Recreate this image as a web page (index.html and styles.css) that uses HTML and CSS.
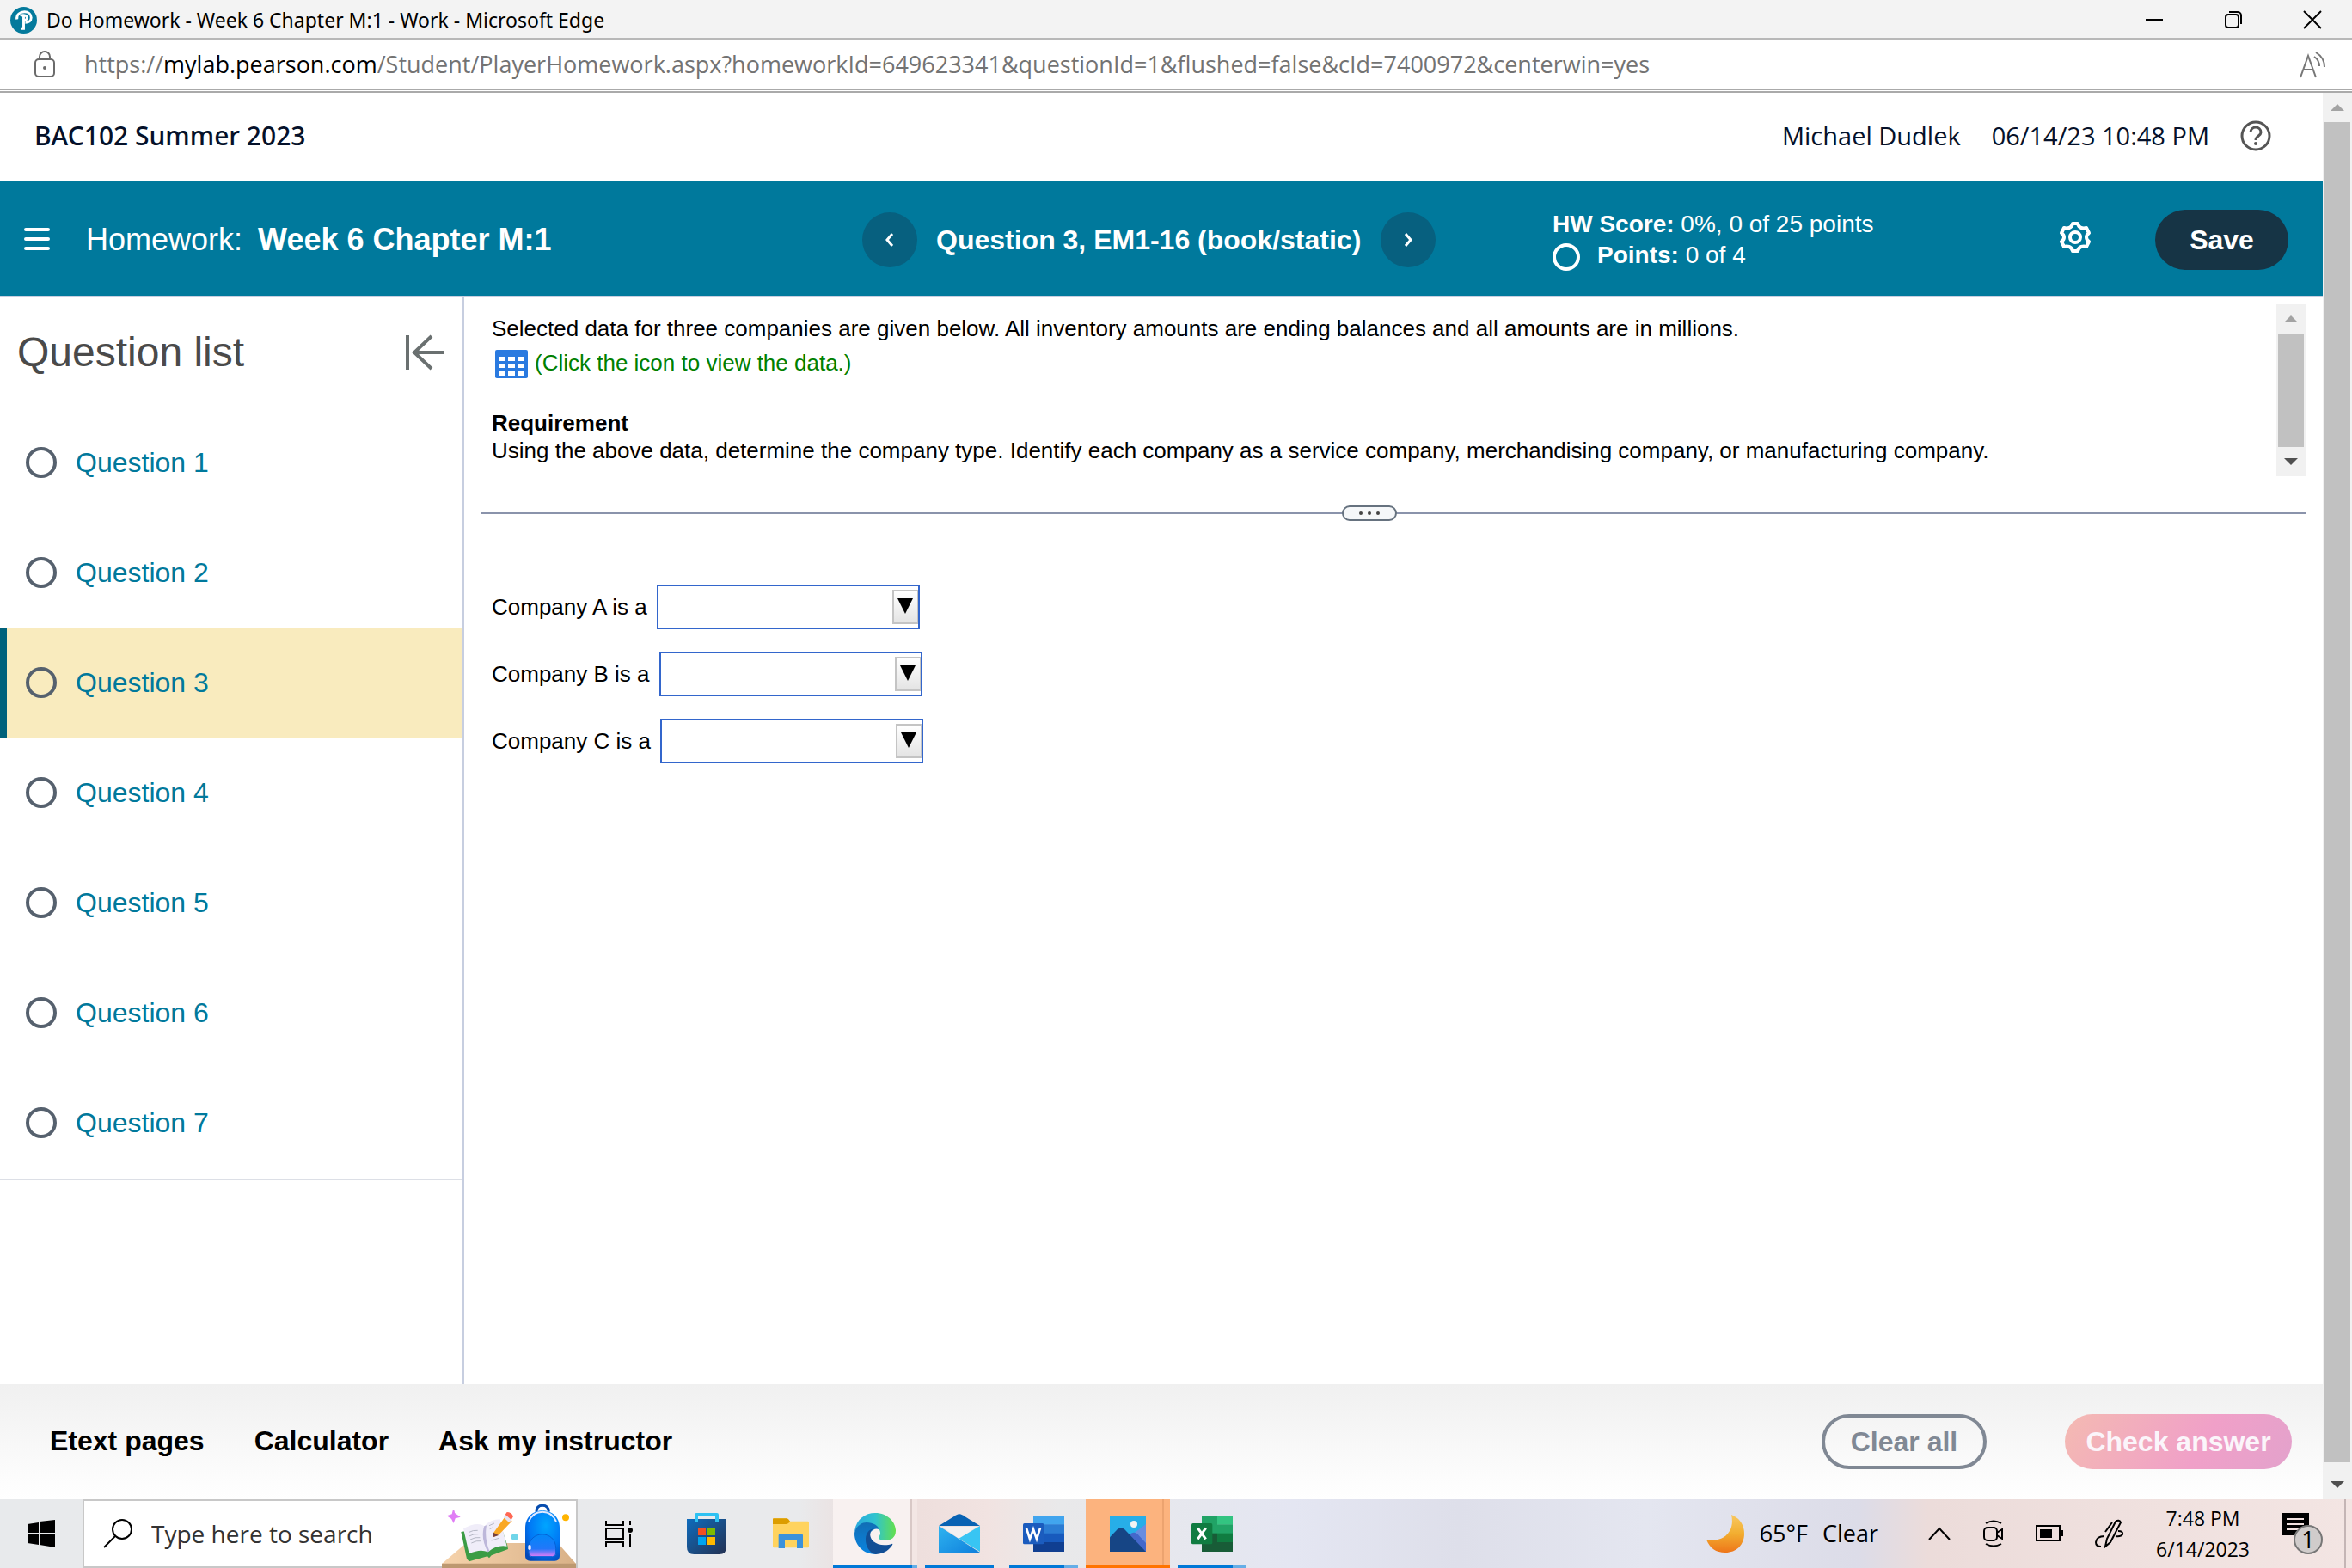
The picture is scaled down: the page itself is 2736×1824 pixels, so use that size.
FILE: index.html
```html
<!DOCTYPE html>
<html lang="en">
<head>
<meta charset="utf-8">
<title>Do Homework - Week 6 Chapter M:1</title>
<link rel="stylesheet" href="styles.css">
</head>
<body>
<header class="titlebar">
  <svg class="favicon" viewBox="0 0 32 32" aria-hidden="true"><circle cx="16" cy="16" r="16" fill="#047a9c"/><path d="M8 15c-1-6 4-9 9-9 5 0 8 3 8 7s-3 6-7 6M16 10v16h-3M12 11c3-2 8-1 8 2s-2 3-4 3" fill="none" stroke="#fff" stroke-width="3"/></svg>
  <span class="window-title">Do Homework - Week 6 Chapter M:1 - Work - Microsoft Edge</span>
  <div class="window-controls">
    <button type="button" aria-label="Minimize"><svg width="22" height="22" viewBox="0 0 22 22"><path d="M1 11h20" stroke="#000" stroke-width="2"/></svg></button>
    <button type="button" aria-label="Restore"><svg width="22" height="22" viewBox="0 0 22 22" fill="none" stroke="#000" stroke-width="2"><rect x="2" y="5" width="15" height="15" rx="3"/><path d="M6 2h10a4 4 0 0 1 4 4v10"/></svg></button>
    <button type="button" aria-label="Close"><svg width="22" height="22" viewBox="0 0 22 22"><path d="M1 1l20 20M21 1L1 21" stroke="#000" stroke-width="2"/></svg></button>
  </div>
</header>
<div class="addressbar">
  <svg class="lock" viewBox="0 0 26 32" fill="none" stroke="#6b6b6b" stroke-width="2" aria-hidden="true"><rect x="2" y="10" width="22" height="20" rx="4"/><path d="M7 10V7a6 6 0 0 1 12 0v3"/><circle cx="13" cy="20" r="2" fill="#6b6b6b" stroke="none"/></svg>
  <span class="url">https://<b>mylab.pearson.com</b>/Student/PlayerHomework.aspx?homeworkId=649623341&amp;questionId=1&amp;flushed=false&amp;cId=7400972&amp;centerwin=yes</span>
  <button type="button" class="read-aloud" aria-label="Read aloud"><svg width="32" height="32" viewBox="0 0 32 32" fill="none" stroke="#777" stroke-width="2"><path d="M2 31L11 6l9 25M5 22h12M18 7q6 4 6 11M20 2q10 6 10 17"/></svg></button>
</div>
<div class="viewport">
  <div class="page">
    <div class="coursebar">
      <span class="course">BAC102 Summer 2023</span>
      <span class="user">Michael Dudlek</span>
      <span class="user">06/14/23 10:48 PM</span>
      <button type="button" class="help" aria-label="Help"><svg width="36" height="36" viewBox="0 0 36 36" fill="none" stroke="#555" stroke-width="3"><circle cx="18" cy="18" r="16"/><path d="M12 14c0-8 12-8 12 0 0 4-6 4-6 9"/><circle cx="18" cy="27" r="2" fill="#555" stroke="none"/></svg></button>
    </div>
    <nav class="homeworkbar">
      <div class="hw-name">
        <button type="button" class="bare" aria-label="Menu"><svg width="30" height="28" viewBox="0 0 30 28" stroke="#fff" stroke-width="4" stroke-linecap="round"><path d="M2 2h26M2 13h26M2 24h26"/></svg></button>
        <h1>Homework: <strong>Week 6 Chapter M:1</strong></h1>
      </div>
      <div class="stepper">
        <button type="button" aria-label="Previous question"><svg width="14" height="18" viewBox="0 0 14 18"><path d="M10 2L4 9l6 7" fill="none" stroke="#fff" stroke-width="3"/></svg></button>
        <h2>Question 3, EM1-16 (book/static)</h2>
        <button type="button" aria-label="Next question"><svg width="14" height="18" viewBox="0 0 14 18"><path d="M4 2l6 7-6 7" fill="none" stroke="#fff" stroke-width="3"/></svg></button>
      </div>
      <div class="score">
        <p><b>HW Score:</b> 0%, 0 of 25 points</p>
        <p class="points"><span class="score-ring"></span><span><b>Points:</b> 0 of 4</span></p>
      </div>
      <div class="hw-actions">
        <button type="button" class="settings" aria-label="Settings"><svg width="38" height="38" viewBox="0 0 38 38" fill="none" stroke="#fff" stroke-width="4" stroke-linejoin="round"><path d="M16 3h6q1 4 4 5t6 0l3 6q-3 2-3 5t3 5l-3 6q-3-1-6 0t-4 5h-6q-1-4-4-5t-6 0l-3-6q3-2 3-5t-3-5l3-6q3 1 6 0t4-5z"/><circle cx="19" cy="19" r="6"/></svg></button>
        <button type="button" class="save">Save</button>
      </div>
    </nav>
    <div class="workspace">
      <aside class="questions">
        <div class="questions-head">
          <h2>Question list</h2>
          <button type="button" class="bare" aria-label="Collapse list"><svg width="48" height="44" viewBox="0 0 48 44" fill="none" stroke="#6a7070" stroke-width="4"><path d="M4 2v40M32 3L12 22l20 19M12 22h34"/></svg></button>
        </div>
        <ul>
          <li><a href="#q1"><span class="ring"></span>Question 1</a></li>
          <li><a href="#q2"><span class="ring"></span>Question 2</a></li>
          <li><a href="#q3" class="current" aria-current="page"><span class="ring"></span>Question 3</a></li>
          <li><a href="#q4"><span class="ring"></span>Question 4</a></li>
          <li><a href="#q5"><span class="ring"></span>Question 5</a></li>
          <li><a href="#q6"><span class="ring"></span>Question 6</a></li>
          <li><a href="#q7"><span class="ring"></span>Question 7</a></li>
        </ul>
      </aside>
      <main class="exercise">
        <section class="prompt">
          <div class="prompt-text">
            <p>Selected data for three companies are given below. All inventory amounts are ending balances and all amounts are in millions.</p>
            <p class="data-link"><svg width="38" height="34" viewBox="0 0 38 34" aria-hidden="true"><rect width="38" height="33" rx="2" fill="#2a7ae0"/><path fill="#fff" d="M4 8h8v5H4zM15 8h8v5h-8zM26 8h8v5h-8zM4 17h8v4H4zM15 17h8v4h-8zM26 17h8v4h-8zM4 25h8v5H4zM15 25h8v5h-8zM26 25h8v5h-8z"/></svg><a href="#data">(Click the icon to view the data.)</a></p>
            <h3>Requirement</h3>
            <p>Using the above data, determine the company type. Identify each company as a service company, merchandising company, or manufacturing company.</p>
          </div>
          <div class="scrollbar" aria-hidden="true"><span class="arrow up"></span><span class="thumb short"></span><span class="arrow down"></span></div>
        </section>
        <div class="splitter"><button type="button" aria-label="Resize"><i></i><i></i><i></i></button></div>
        <form class="answers">
          <div class="answer"><label for="a">Company A is a</label><div class="drop"><select id="a"><option></option><option>service company</option></select><span class="drop-arrow"></span></div></div>
          <div class="answer"><label for="b">Company B is a</label><div class="drop"><select id="b"><option></option><option>service company</option></select><span class="drop-arrow"></span></div></div>
          <div class="answer"><label for="c">Company C is a</label><div class="drop"><select id="c"><option></option><option>service company</option></select><span class="drop-arrow"></span></div></div>
        </form>
      </main>
    </div>
    <footer class="tools">
      <button type="button" class="tool">Etext pages</button>
      <button type="button" class="tool">Calculator</button>
      <button type="button" class="tool">Ask my instructor</button>
      <button type="button" class="clear">Clear all</button>
      <button type="button" class="check">Check answer</button>
    </footer>
  </div>
  <div class="scrollbar" aria-hidden="true"><span class="arrow up"></span><span class="thumb"></span><span class="arrow down"></span></div>
</div>
<div class="taskbar">
  <button type="button" class="start" aria-label="Start"><svg width="32" height="32" viewBox="0 0 32 32"><path d="M0 5l13-2v12H0zM14 2l18-2v15H14zM0 16h13v13L0 27zM14 16h18v16l-18-3z"/></svg></button>
  <div class="search">
    <svg class="magnifier" viewBox="0 0 34 34" fill="none" stroke="#000" stroke-width="2" aria-hidden="true"><circle cx="22" cy="12" r="11"/><path d="M14 20L1 33"/></svg>
    <input type="text" placeholder="Type here to search" aria-label="Type here to search">
    <svg class="search-art" viewBox="45 18 468 234" aria-hidden="true">
      <defs>
        <linearGradient id="desk"><stop offset="0" stop-color="#f6d3ac"/><stop offset="1" stop-color="#d9b187"/></linearGradient>
        <radialGradient id="bag" cx=".6" cy=".3" r=".8"><stop offset="0" stop-color="#00a5ff"/><stop offset=".6" stop-color="#0077f5"/><stop offset="1" stop-color="#0348b8"/></radialGradient>
        <linearGradient id="pocket" x2="0" y2="1"><stop offset="0" stop-color="#0088f8"/><stop offset=".65" stop-color="#2277fa"/><stop offset="1" stop-color="#e47cf5"/></linearGradient>
      </defs>
      <path d="M45 237L130 165H450L513 237z" fill="url(#desk)"/><path d="M45 236h468v16H45z" fill="#bd9870"/>
      <path d="M84 48q5 0 6 12l20 14-18 5-6 17-8-16-16-10 18-6z" fill="#e07df5"/>
      <path d="M112 126l20 94 8 9 64-18 6 6 8-9 58-22-2-12-24-72z" fill="#3b9c45"/>
      <path d="M120 114q48-26 74-8 20-24 54-24l24 94q-36-6-66 20-28-12-66 6z" fill="#f0edf9"/>
      <path d="M193 106q-14 40 12 90l6-3q-18-46-10-90z" fill="#bdb7da"/>
      <path d="M138 128q16-9 32-7M140 141q16-9 32-7M144 153q18-10 34-7M148 165q18-10 34-7M210 104l18-8M212 116l12-6M218 156l26-8" fill="none" stroke="#b6b8c5" stroke-width="3"/>
      <path d="M226 128l42-58 22 18-46 48-18 8z" fill="#f9a825"/><path d="M225 128l18 10-18 6z" fill="#754040"/><path d="M264 69l8-12q16 0 22 15l-10 18z" fill="#ff6752"/><path d="M260 75l8-8 20 17-8 10z" fill="#e7e4f0"/>
      <circle cx="299" cy="144" r="12" fill="#6fd5e9"/><circle cx="477" cy="76" r="12" fill="#ffb400"/>
      <path d="M375 56q0-22 21-22t22 22" fill="none" stroke="#064cae" stroke-width="9"/>
      <path d="M336 112c0-80 120-80 120 0v98q0 17-17 17h-86q-17 0-17-17z" fill="url(#bag)"/>
      <path d="M348 90q14-34 48-34t48 34" fill="none" stroke="#dfe8ff" stroke-width="6"/>
      <path d="M348 184c0-66 95-66 95 0v16q0 12-12 12h-71q-12 0-12-12z" fill="url(#pocket)" stroke="#0560d5" stroke-width="3"/>
      <rect x="346" y="171" width="10" height="18" rx="5" fill="#eef"/>
    </svg>
  </div>
  <button type="button" class="task view" aria-label="Task view"><svg width="34" height="32" viewBox="0 0 34 32" fill="none" stroke="#000" stroke-width="2"><path d="M2 1v5h20V1M2 31v-5h20v5"/><rect x="2" y="10" width="20" height="12"/><path d="M30 1v5M30 16v15"/><circle cx="30" cy="12" r="3" fill="#000" stroke="none"/></svg></button>
  <button type="button" class="task" aria-label="Microsoft Store"><svg width="48" height="48" viewBox="0 0 144 144"><defs><linearGradient id="store" x2="1" y2="1"><stop offset="0" stop-color="#0f6cbd"/><stop offset="1" stop-color="#243152"/></linearGradient></defs><path d="M3 21h138v98q0 25-25 25H28q-25 0-25-25z" fill="url(#store)"/><path d="M36 33V6h72v27" fill="none" stroke="#2dc1f2" stroke-width="12" stroke-linejoin="round"/><path d="M42 51h27v27H42z" fill="#f25022"/><path d="M75 51h27v27H75z" fill="#7fba00"/><path d="M42 84h27v27H42z" fill="#00a4ef"/><path d="M75 84h27v27H75z" fill="#ffb900"/></svg></button>
  <button type="button" class="task" aria-label="File Explorer"><svg width="42" height="36" viewBox="0 0 126 108"><path d="M0 4q0-3 3-3h45q6 0 12 10H122q4 0 4 4v84q0 4-4 4H4q-4 0-4-4z" fill="#ffd35e"/><path d="M0 4q0-3 3-3h45q5 0 12 10-6 10-12 10H0z" fill="#dc9d00"/><path d="M20 105V60q0-6 6-6h73q6 0 6 6v45H84V75H42v30z" fill="#3b92dc"/></svg></button>
  <button type="button" class="task running active" aria-label="Microsoft Edge"><svg width="48" height="48" viewBox="0 0 144 144"><defs><linearGradient id="e1"><stop offset="0" stop-color="#2aa9df"/><stop offset=".5" stop-color="#30c3cf"/><stop offset="1" stop-color="#63df4d"/></linearGradient><linearGradient id="e2" x2="0" y2="1"><stop offset="0" stop-color="#116eb5"/><stop offset="1" stop-color="#0a84e0"/></linearGradient></defs><path d="M0 66C4 24 36 0 72 0c46 0 72 34 72 62 0 24-18 34-36 34-16 0-24-6-24-10s6-6 6-16c0-12-12-24-28-30C40 32 12 40 0 66z" fill="url(#e1)"/><path d="M0 72C2 48 24 33 42 33c22 0 40 10 46 26-14-8-30 0-34 14 0 30 6 54 26 70-46 4-80-29-80-71z" fill="url(#e2)"/><path d="M70 54c-14 4-18 16-14 30 6 18 26 28 48 28 12 0 20-2 28-5 2 1 1 4-2 8-14 20-34 29-58 29-22-8-34-30-33-54 1-20 12-34 31-36z" fill="#124f96"/></svg></button>
  <button type="button" class="task running" aria-label="Mail"><svg width="48" height="46" viewBox="0 0 144 138"><defs><linearGradient id="m1" x2="1" y2="1"><stop offset="0" stop-color="#2fb4f0"/><stop offset="1" stop-color="#0f7fdc"/></linearGradient></defs><path d="M0 42L62 4q10-6 20 0l62 38z" fill="#0862b3"/><path d="M12 45h120L72 88z" fill="#f3f1f1"/><path d="M144 42v90L70 86z" fill="#38c5f3"/><path d="M0 42l144 93H0z" fill="url(#m1)"/></svg></button>
  <button type="button" class="task running multi" aria-label="Word"><svg width="48" height="42" viewBox="0 0 144 126"><path d="M36 0h108v32H36z" fill="#41a5ee"/><path d="M36 31h108v32H36z" fill="#2b7cd3"/><path d="M36 62h108v32H36z" fill="#185abd"/><path d="M36 93h108v33H36z" fill="#103f91"/><rect y="27" width="73" height="73" rx="5" fill="#1b5cbe"/><path d="M12 44l12 38 12-34 12 34 12-38" fill="none" stroke="#fff" stroke-width="8"/></svg></button>
  <button type="button" class="task running attention" aria-label="Photos"><svg width="42" height="42" viewBox="0 0 126 126"><path d="M0 0h126v126H0z" fill="#27aee8"/><path d="M126 30v96L60 80z" fill="#688de0"/><path d="M70 66q14-14 28 0l28 30v30H60z" fill="#4468cb"/><path d="M0 76l26-27q13-12 26 0l74 77H0z" fill="#164585"/><circle cx="84" cy="30" r="12" fill="#f3f3f3"/></svg></button>
  <button type="button" class="task running multi" aria-label="Excel"><svg width="48" height="42" viewBox="0 0 144 126"><path d="M36 0h54v64H36z" fill="#21a366"/><path d="M90 0h54v32H90z" fill="#33c481"/><path d="M90 31h54v32H90z" fill="#21a366"/><path d="M36 62h54v32H36z" fill="#185c37"/><path d="M90 62h54v32H90z" fill="#107c41"/><path d="M36 93h108v33H36z" fill="#185c37"/><rect y="27" width="73" height="73" rx="5" fill="#107c41"/><path d="M22 44l28 38M50 44L22 82" fill="none" stroke="#fff" stroke-width="9"/></svg></button>
  <div class="tray">
    <div class="weather"><svg width="46" height="46" viewBox="0 0 46 46" aria-hidden="true"><defs><linearGradient id="moon" x2="0" y2="1"><stop offset="0" stop-color="#f8c860"/><stop offset=".5" stop-color="#f2ae30"/><stop offset="1" stop-color="#ee7519"/></linearGradient></defs><path d="M30 1c10 4 15 12 15 22 0 13-9 22-22 22C12 45 5 40 1 30c18 4 34-8 29-29z" fill="url(#moon)"/></svg><span>65°F</span><span>Clear</span></div>
    <svg width="28" height="16" viewBox="0 0 28 16" aria-hidden="true"><path d="M2 15L14 2l12 13" fill="none" stroke="#000" stroke-width="2"/></svg>
    <svg width="24" height="32" viewBox="0 0 24 32" fill="none" stroke="#000" stroke-width="2" aria-hidden="true"><rect x="1" y="9" width="15" height="15" rx="4"/><path d="M16 15l6-4v11l-6-4M3 4q9-5 18 0M3 28q9 5 18 0"/></svg>
    <svg width="32" height="20" viewBox="0 0 32 20" aria-hidden="true"><path d="M1 1h27v17H1z" fill="none" stroke="#000" stroke-width="2"/><path d="M5 5h14v10H5zM29 6h3v7h-3z"/></svg>
    <svg width="34" height="34" viewBox="0 0 34 34" fill="none" stroke="#000" stroke-width="2" aria-hidden="true"><path d="M12 32l2-9L24 3q4-3 6 1L18 27zM12 15L20 4M11 20q-9 0-10 7 0 5 6 5M27 14q6 0 5 4-2 3-8 2"/></svg>
    <div class="clock"><span>7:48 PM</span><span>6/14/2023</span></div>
    <div class="notices"><svg width="34" height="34" viewBox="0 0 34 34" aria-hidden="true"><path d="M0 0h32v26H20l-5 6v-6H0z"/><path d="M6 7h20M6 13h20M6 19h20" stroke="#f0e0de" stroke-width="2"/></svg><span class="badge">1</span></div>
    <span class="show-desktop"></span>
  </div>
</div>
</body>
</html>
```
FILE: styles.css
```css
* { box-sizing: border-box; }
body {
  margin: 0;
  min-height: 100vh;
  display: flex;
  flex-direction: column;
  background: #fff;
  color: #000;
  font: 26px/32px "Liberation Sans", Arial, sans-serif;
}
h1, h2, h3, p, ul { margin: 0; padding: 0; }
svg { display: block; flex: none; }
button {
  display: flex;
  align-items: center;
  justify-content: center;
  padding: 0;
  border: 0;
  background: none;
  color: inherit;
  font: inherit;
}

/* Browser window */
.titlebar {
  display: flex;
  align-items: center;
  height: 47px;
  padding: 2px 13px 0 12px;
  gap: 11px;
  background: #f3f3f3;
  border-bottom: 3px solid #b8b8b8;
  font: 23px/32px "Noto Sans", sans-serif;
}
.favicon { width: 31px; height: 31px; }
.window-controls { margin-left: auto; display: flex; gap: 70px; padding-right: 22px; }
.addressbar {
  display: flex;
  align-items: center;
  height: 61px;
  padding: 0 30px 0 39px;
  gap: 33px;
  border-bottom: 5px double #aaa;
  color: #737373;
  font: 27px/32px "Open Sans", "Noto Sans", sans-serif;
}
.lock { width: 26px; height: 32px; }
.url b { font-weight: 400; color: #000; }
.read-aloud { margin-left: auto; }
.viewport { flex: 1; display: grid; grid-template-columns: minmax(0, 1fr) 34px; }
.page { display: flex; flex-direction: column; }

/* Scrollbars */
.scrollbar { display: flex; flex-direction: column; width: 34px; background: #f1f1f1; }
.arrow { flex: none; height: 34px; display: flex; align-items: center; justify-content: center; }
.arrow::before { content: ""; border: 8px solid transparent; }
.arrow.up::before { border-top: 0; border-bottom-color: #a3a3a3; }
.arrow.down::before { border-bottom: 0; border-top-color: #505050; }
.thumb { flex: 1; margin: 0 2px 9px; background: #c1c1c1; }
.thumb.short { margin-bottom: 0; }

/* Course header */
.coursebar {
  display: flex;
  align-items: center;
  height: 102px;
  padding: 0 60px 2px 40px;
  gap: 36px;
  color: #05112a;
  font: 29px/40px "Open Sans", "Noto Sans", sans-serif;
}
.course { margin-right: auto; font-family: "Noto Sans", sans-serif; font-size: 30px; font-weight: 500; }

/* Homework bar */
.homeworkbar {
  display: grid;
  grid-template-columns: 1003fr 803fr 589fr 307fr;
  align-items: center;
  height: 136px;
  padding-top: 4px;
  background: #00799c;
  border-bottom: 2px solid #c7cee0;
  color: #fff;
}
.hw-name { display: flex; align-items: center; gap: 42px; padding-left: 28px; }
.hw-name h1 { font-size: 36px; line-height: 40px; font-weight: 400; }
.hw-name strong { margin-left: 8px; }
.stepper { display: flex; align-items: center; gap: 22px; white-space: nowrap; }
.stepper h2 { padding-right: 1px; font-size: 32px; line-height: 40px; }
.stepper button { width: 64px; height: 64px; border-radius: 50%; background: #07607f; }
.score { font-size: 28px; line-height: 36px; }
.points { display: flex; align-items: center; gap: 20px; }
.score-ring { width: 32px; height: 32px; margin-top: 4px; border: 4px solid #fff; border-radius: 50%; }
.hw-actions { display: flex; align-items: center; justify-content: space-between; padding-right: 40px; }
.settings { padding-bottom: 6px; }
.save { width: 155px; height: 70px; border-radius: 35px; background: #163445; font-size: 32px; font-weight: 700; }

/* Question list */
.workspace { flex: 1; display: grid; grid-template-columns: 540px minmax(0, 1fr); }
.questions { border-right: 2px solid #c7cee0; }
.questions-head { display: flex; align-items: center; justify-content: space-between; height: 129px; padding: 0 20px 2px; }
.questions-head h2 { font-size: 48px; line-height: 56px; font-weight: 400; color: #4a4a4a; }
.questions ul { list-style: none; border-bottom: 2px solid #dcdfe6; }
.questions a {
  display: flex;
  align-items: center;
  gap: 22px;
  height: 128px;
  padding: 0 0 2px 22px;
  border-left: 8px solid transparent;
  color: #00799c;
  font-size: 32px;
  text-decoration: none;
}
.questions a.current { background: #f9ebbe; border-left-color: #00617b; }
.ring { width: 36px; height: 36px; border: 4px solid #56616e; border-radius: 50%; }

/* Exercise */
.exercise { padding: 8px 20px 0; }
.prompt { display: flex; height: 200px; }
.prompt-text { flex: 1; padding: 12px 0 0 12px; }
.data-link { display: flex; align-items: center; gap: 8px; height: 32px; margin: 8px 0 38px 4px; }
.data-link svg { margin-top: 4px; }
.data-link a { color: #008000; text-decoration: none; }
.prompt h3 { font-size: 26px; line-height: 32px; }
.splitter {
  display: flex;
  justify-content: center;
  align-items: center;
  height: 18px;
  margin-top: 34px;
  padding-right: 56px;
  background: linear-gradient(#8a93ab, #8a93ab) center / 100% 2px no-repeat;
}
.splitter button { width: 64px; height: 18px; gap: 6px; border: 2px solid #66727f; border-radius: 9px; background: #f5f7f9; }
.splitter i { width: 4px; height: 4px; border-radius: 50%; background: #444; }
.answers { display: grid; gap: 26px; padding: 74px 0 0 12px; }
.answer { display: flex; align-items: center; gap: 11px; }
.drop { position: relative; }
.drop select {
  display: block;
  width: 306px;
  height: 52px;
  border: 2px solid #36c;
  border-radius: 0;
  background: #fff;
  appearance: none;
  font: inherit;
}
.drop-arrow {
  position: absolute;
  top: 6px;
  right: 2px;
  display: flex;
  justify-content: center;
  width: 30px;
  height: 40px;
  padding-top: 8px;
  border: 2px solid #c4c4c4;
  border-right-width: 1px;
  background: linear-gradient(#fff, #e4e4e4);
  pointer-events: none;
}
.drop-arrow::before { content: ""; height: 0; border: 9px solid transparent; border-top: 18px solid #000; border-bottom: 0; }

/* Tools footer */
.tools {
  display: flex;
  align-items: center;
  height: 134px;
  gap: 58px;
  padding: 0 36px 0 58px;
  background: linear-gradient(#f0f0f0, #fff);
  font-size: 32px;
  font-weight: 700;
}
.tool { padding-bottom: 3px; }
.clear { width: 192px; height: 64px; margin-left: auto; border: 4px solid #808894; border-radius: 32px; color: #808894; }
.check { width: 264px; height: 64px; margin-left: 33px; border-radius: 32px; background: linear-gradient(120deg, #f4bab2, #f0a0c8 60%, #e3a2cc); color: #fbf5fa; }

/* Taskbar */
.taskbar {
  display: flex;
  height: 80px;
  background: linear-gradient(90deg, #e8eaec, #e9eaec 34%, #ecdcda 37%, #f1e3e1 42%, #e9e9ea 45%, #e4e6f2 55%, #dedfea 62%, #e4e6f0 70%, #dcdce8 79%, #ecdcda 82%, #f3e5e3);
  font: 28px/36px "Open Sans", "Noto Sans", sans-serif;
}
.start { width: 96px; }
.search { display: flex; align-items: center; width: 576px; border: 2px solid #c8c8c8; background: #fff; }
.magnifier { width: 34px; height: 34px; margin-left: 22px; }
.search input {
  flex: 1;
  min-width: 0;
  margin-left: 22px;
  padding: 0;
  border: 0;
  outline: 0;
  background: none;
  font: inherit;
  line-height: 40px;
}
.search input::placeholder { color: #333; opacity: 1; }
.search-art { width: 156px; height: 78px; align-self: flex-end; margin-bottom: -2px; }
.task { width: 98px; position: relative; }
.view { width: 96px; margin-right: 5px; }
.running::after { content: ""; position: absolute; bottom: 0; left: 9px; width: 80px; height: 4px; background: #0078d7; }
.multi::after { background: linear-gradient(90deg, #0078d7 80%, #66aee7 80%); }
.active { background: linear-gradient(90deg, #f8f1f0 90px, #d8c8c6 90px 92px, #f3e6e4 92px); }
.active::after, .attention::after { left: 0; width: 100%; }
.active::after { background: linear-gradient(90deg, #0078d7 92px, #66aee7 92px); }
.attention { background: linear-gradient(90deg, #fcb37e 89px, #eca36f 89px 91px, #fcb37e 91px); }
.attention::after { background: #ff7300; }
.tray { display: flex; align-items: center; gap: 37px; margin-left: auto; padding-right: 7px; }
.weather { display: flex; align-items: center; gap: 17px; margin-right: 20px; font-size: 27px; }
.clock { display: grid; justify-items: center; font-size: 23px; }
.notices { position: relative; width: 48px; height: 48px; }
.badge {
  position: absolute;
  right: 0;
  bottom: 0;
  width: 34px;
  height: 34px;
  border: 2px solid #777;
  border-radius: 50%;
  background: #d0cccb;
  font-size: 27px;
  line-height: 30px;
  text-align: center;
}
.show-desktop { width: 2px; height: 80px; margin-left: -12px; background: #c4b5b5; }
```
